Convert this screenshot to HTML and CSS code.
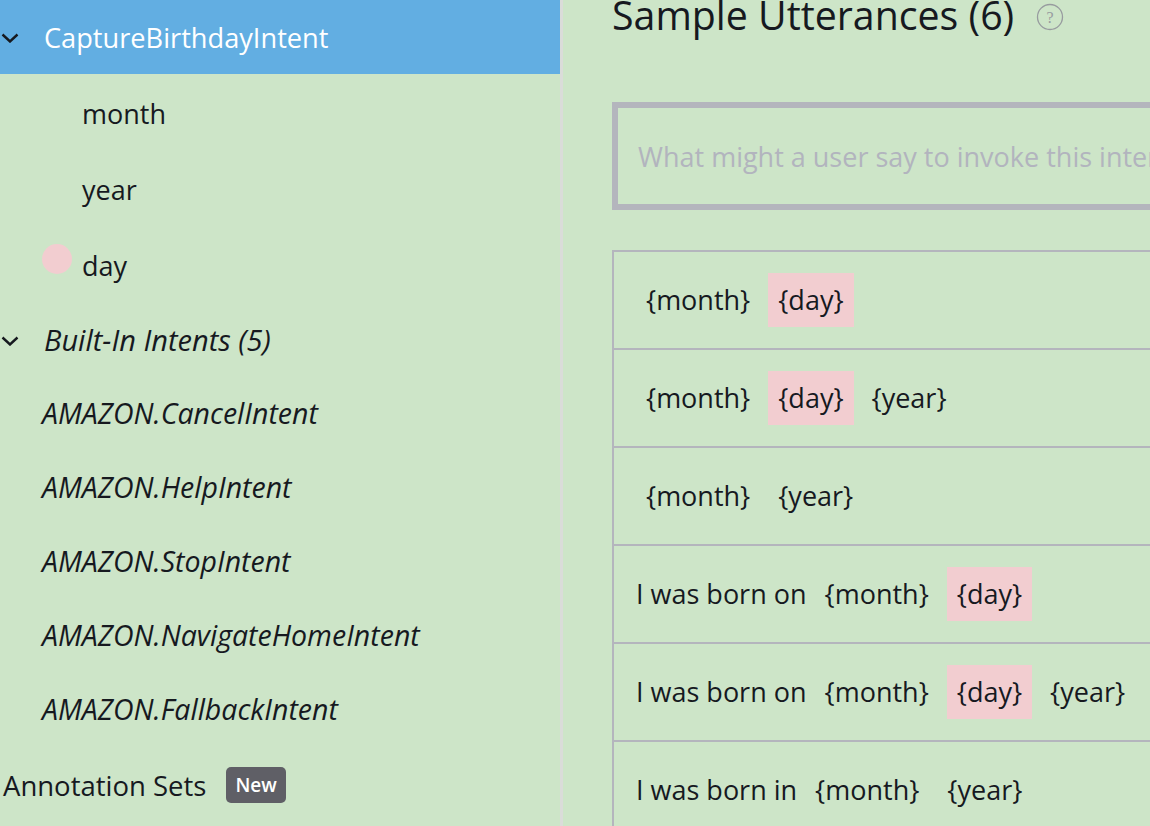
FILE: index.html
```html
<!DOCTYPE html>
<html lang="en">
<head>
<meta charset="utf-8">
<title>Sample Utterances</title>
<link rel="stylesheet" href="styles.css">
</head>
<body>
<div class="app">
  <aside class="sidebar">
    <div class="row intent-header">
      <svg class="chev" viewBox="0 0 18 10" width="18" height="10"><path d="M1.5 1.5 L9 8.5 L16.5 1.5" fill="none" stroke="#16191f" stroke-width="2.4"/></svg>
      <span class="intent-name">CaptureBirthdayIntent</span>
    </div>
    <div class="row slot"><span class="slot-name">month</span></div>
    <div class="row slot"><span class="slot-name">year</span></div>
    <div class="row slot slot-flag"><span class="dot"></span><span class="slot-name">day</span></div>
    <div class="row builtin-header">
      <svg class="chev" viewBox="0 0 18 10" width="18" height="10"><path d="M1.5 1.5 L9 8.5 L16.5 1.5" fill="none" stroke="#16191f" stroke-width="2.4"/></svg>
      <span class="builtin-title">Built-In Intents (5)</span>
    </div>
    <div class="row builtin">AMAZON.CancelIntent</div>
    <div class="row builtin">AMAZON.HelpIntent</div>
    <div class="row builtin">AMAZON.StopIntent</div>
    <div class="row builtin">AMAZON.NavigateHomeIntent</div>
    <div class="row builtin">AMAZON.FallbackIntent</div>
    <div class="row annotation"><span>Annotation Sets</span><span class="badge">New</span></div>
  </aside>
  <main class="main">
    <h1 class="title"><span class="title-text">Sample Utterances (6)</span>
      <svg class="help" viewBox="0 0 28 28" width="28" height="28"><circle cx="14" cy="14" r="12.5" fill="none" stroke="#979b9f" stroke-width="1.3"/><text x="14" y="19.5" text-anchor="middle" font-family="Liberation Serif, serif" font-size="16" fill="#979b9f">?</text></svg>
    </h1>
    <div class="input-box"><span class="placeholder">What might a user say to invoke this intent?</span></div>
    <div class="table">
      <div class="utt"><span class="chip">{month}</span><span class="chip hl">{day}</span></div>
      <div class="utt"><span class="chip">{month}</span><span class="chip hl">{day}</span><span class="chip">{year}</span></div>
      <div class="utt"><span class="chip">{month}</span><span class="chip">{year}</span></div>
      <div class="utt"><span class="plain">I was born on</span><span class="chip">{month}</span><span class="chip hl">{day}</span></div>
      <div class="utt"><span class="plain">I was born on</span><span class="chip">{month}</span><span class="chip hl">{day}</span><span class="chip">{year}</span></div>
      <div class="utt"><span class="plain">I was born in</span><span class="chip">{month}</span><span class="chip">{year}</span></div>
    </div>
  </main>
</div>
</body>
</html>
```
FILE: styles.css
```css
html, body {
  margin: 0;
  padding: 0;
  background: #cde5c8;
  overflow: hidden;
}
body {
  font-family: "Open Sans", "Noto Sans", sans-serif;
  color: #16191f;
  width: 1150px;
  height: 826px;
}
.app {
  display: flex;
  height: 826px;
  overflow: hidden;
}
.sidebar {
  width: 560px;
  flex: 0 0 560px;
  border-right: 3px solid #dadcd9;
  display: flex;
  flex-direction: column;
}
.row {
  display: flex;
  align-items: center;
  font-size: 27px;
  white-space: nowrap;
}
.intent-header {
  height: 74px;
  background: #62aee2;
  color: #ffffff;
}
.chev {
  margin-left: 1px;
  margin-right: 25px;
  margin-top: 2px;
  flex: none;
}
.intent-name {
  font-size: 27.2px;
}
.slot {
  height: 76px;
  padding-left: 82px;
  padding-top: 3px;
  box-sizing: border-box;
}
.slot-flag {
  padding-left: 42px;
}
.dot {
  width: 30px;
  height: 30px;
  border-radius: 50%;
  background: #f2cdd0;
  margin-right: 10px;
  margin-top: -14px;
}
.builtin-header {
  height: 74px;
  font-style: italic;
  font-size: 29px;
}
.builtin-header .chev {
  margin-top: 4px;
}
.builtin {
  height: 74px;
  padding-left: 42px;
  font-style: italic;
  font-size: 28.5px;
}
.annotation {
  height: 78px;
  padding-left: 3px;
  font-size: 27.5px;
}
.badge {
  margin-left: 20px;
  background: #5f5f66;
  color: #ffffff;
  font-size: 19px;
  font-weight: 600;
  border-radius: 5px;
  padding: 0 9px;
  height: 36px;
  line-height: 36px;
}
.main {
  flex: none;
  width: 700px;
  padding-left: 49px;
  overflow: hidden;
}
.title {
  margin: 0;
  height: 34px;
  line-height: 34px;
  font-size: 39.3px;
  font-weight: 400;
  display: flex;
  align-items: center;
  white-space: nowrap;
  margin-top: -2px;
}
.help {
  margin-left: 22px;
  margin-top: 4px;
  flex: none;
}
.input-box {
  margin-top: 70px;
  height: 96px;
  border: 6px solid #b4b5bd;
  border-right: none;
  display: flex;
  align-items: center;
  padding-left: 20px;
  white-space: nowrap;
  overflow: hidden;
}
.placeholder {
  font-size: 27px;
  color: #b2b4be;
}
.table {
  margin-top: 40px;
  border-top: 2px solid #b4b5bd;
  border-left: 2px solid #b4b5bd;
}
.utt {
  height: 96px;
  border-bottom: 2px solid #b4b5bd;
  display: flex;
  align-items: center;
  padding-left: 22px;
  gap: 8px;
  font-size: 27px;
  white-space: nowrap;
}
.chip {
  height: 54px;
  line-height: 54px;
  padding: 0 10px;
}
.plain {
  height: 54px;
  line-height: 54px;
}
.hl {
  background: #f2cdd0;
}
```
